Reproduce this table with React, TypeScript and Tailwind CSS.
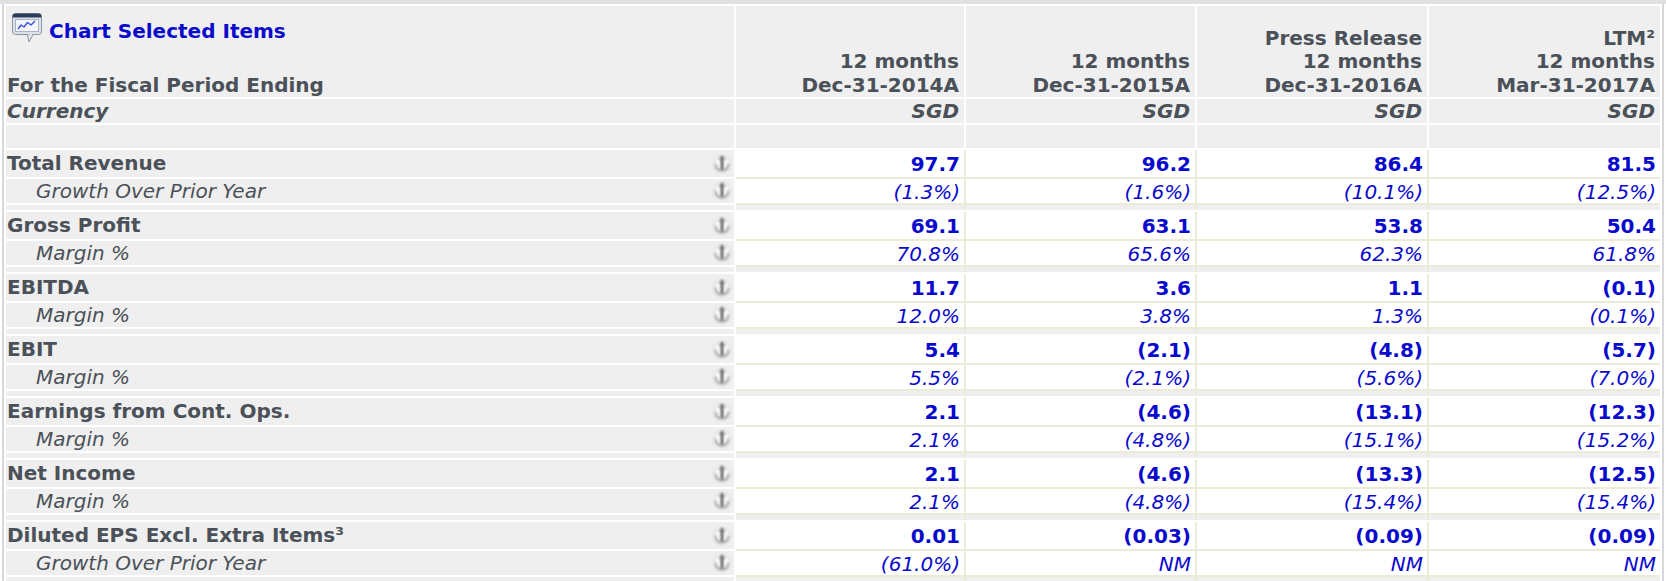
import React from "react";

type Group = { label: string; sub: string; main: string[]; subv: string[] };

const groups: Group[] = [
  { label: "Total Revenue", sub: "Growth Over Prior Year", main: ["97.7", "96.2", "86.4", "81.5"], subv: ["(1.3%)", "(1.6%)", "(10.1%)", "(12.5%)"] },
  { label: "Gross Profit", sub: "Margin %", main: ["69.1", "63.1", "53.8", "50.4"], subv: ["70.8%", "65.6%", "62.3%", "61.8%"] },
  { label: "EBITDA", sub: "Margin %", main: ["11.7", "3.6", "1.1", "(0.1)"], subv: ["12.0%", "3.8%", "1.3%", "(0.1%)"] },
  { label: "EBIT", sub: "Margin %", main: ["5.4", "(2.1)", "(4.8)", "(5.7)"], subv: ["5.5%", "(2.1%)", "(5.6%)", "(7.0%)"] },
  { label: "Earnings from Cont. Ops.", sub: "Margin %", main: ["2.1", "(4.6)", "(13.1)", "(12.3)"], subv: ["2.1%", "(4.8%)", "(15.1%)", "(15.2%)"] },
  { label: "Net Income", sub: "Margin %", main: ["2.1", "(4.6)", "(13.3)", "(12.5)"], subv: ["2.1%", "(4.8%)", "(15.4%)", "(15.4%)"] },
  { label: "Diluted EPS Excl. Extra Items³", sub: "Growth Over Prior Year", main: ["0.01", "(0.03)", "(0.09)", "(0.09)"], subv: ["(61.0%)", "NM", "NM", "NM"] },
];

const colW = ["w-[228px]", "w-[229px]", "w-[230px]", "w-[231px]"];

const headers: string[][] = [
  ["12 months", "Dec-31-2014A"],
  ["12 months", "Dec-31-2015A"],
  ["Press Release", "12 months", "Dec-31-2016A"],
  ["LTM²", "12 months", "Mar-31-2017A"],
];

function ChartIcon() {
  return (
    <svg width="30" height="30" viewBox="0 0 30 30" className="shrink-0">
      <path d="M15 20 L17 29 L22 20 Z" fill="#dde1e8" stroke="#8d96a3" strokeWidth="1" />
      <rect x="0.5" y="0.5" width="29" height="21" rx="3" fill="#dde1e8" stroke="#8d96a3" strokeWidth="1" />
      <path d="M3.5 0.5 H26.5 A3 3 0 0 1 29.5 3.5 V4.5 H0.5 V3.5 A3 3 0 0 1 3.5 0.5 Z" fill="#2c3d5c" />
      <rect x="3.5" y="6.5" width="23" height="12" fill="#f3f5fb" stroke="#aab3c3" strokeWidth="1" />
      <polyline points="6,16 9,12 12,14 15.5,9.5 19,12 23,8" fill="none" stroke="#3f56d6" strokeWidth="1.5" strokeLinejoin="round" />
      <path d="M16 20.5 L17.3 27 L21 20.5" fill="#dde1e8" />
    </svg>
  );
}

function Anchor() {
  return (
    <svg width="22" height="20" viewBox="0 0 22 20" className="shrink-0">
      <defs>
        <radialGradient id="anc-bg" cx="50%" cy="50%" r="50%">
          <stop offset="0%" stopColor="#ffffff" />
          <stop offset="65%" stopColor="#f6f6f6" />
          <stop offset="100%" stopColor="#dcdcdc" stopOpacity="0.7" />
        </radialGradient>
        <filter id="anc-blur" x="-30%" y="-30%" width="160%" height="160%">
          <feGaussianBlur stdDeviation="0.8" />
        </filter>
      </defs>
      <circle cx="11" cy="10" r="9.5" fill="url(#anc-bg)" filter="url(#anc-blur)" />
      <g filter="url(#anc-blur)" fill="none" strokeLinecap="round">
        <path d="M11 3 V15.5" stroke="#555" strokeWidth="2.6" />
        <path d="M8.4 5 H13.6" stroke="#777" strokeWidth="1.4" />
        <path d="M4.5 10.5 Q5.5 16.5 11 16.5 Q16.5 16.5 17.5 10.5" stroke="#a0a0a0" strokeWidth="1.8" />
      </g>
    </svg>
  );
}

export default function App() {
  return (
    <div className="w-[1666px] h-[581px] overflow-hidden bg-white font-['DejaVu_Sans','Verdana',sans-serif] text-[20px] text-[#4b5158]">
      <div className="h-[4px] bg-[#dfe0e1]" />
      <div className="mx-[2px] h-[577px] overflow-hidden border-x-2 border-[#d5d8dc] px-[2px] pt-[2px]">
        {/* Header row */}
        <div className="flex gap-[2px] mb-[2px]">
          <div className="w-[728px] h-[91px] bg-[#efefef] flex flex-col justify-between">
            <div className="flex items-end gap-[7px] pl-[6px] pt-[7px]">
              <ChartIcon />
              <span className="font-bold text-[#0a0acc] leading-[23px] whitespace-nowrap">Chart Selected Items</span>
            </div>
            <div className="font-bold leading-[23.5px] pl-[1px] whitespace-nowrap">For the Fiscal Period Ending</div>
          </div>
          {headers.map((lines, i) => (
            <div key={i} className={`${colW[i]} h-[91px] bg-[#efefef] flex flex-col justify-end items-end pr-[5px] font-bold leading-[23.5px] whitespace-nowrap`}>
              {lines.map((l, j) => (
                <div key={j}>{l}</div>
              ))}
            </div>
          ))}
        </div>

        {/* Currency row */}
        <div className="flex gap-[2px] mb-[2px]">
          <div className="w-[728px] h-[24px] bg-[#efefef] font-bold italic leading-[24px] pl-[1px]">Currency</div>
          {colW.map((w, i) => (
            <div key={i} className={`${w} h-[24px] bg-[#efefef] font-bold italic leading-[24px] text-right pr-[5px]`}>SGD</div>
          ))}
        </div>

        {/* Empty row */}
        <div className="flex gap-[2px] mb-[2px]">
          <div className="w-[728px] h-[23px] bg-[#efefef]" />
          {colW.map((w, i) => (
            <div key={i} className={`${w} h-[23px] bg-[#efefef]`} />
          ))}
        </div>

        {groups.map((g, gi) => (
          <div key={gi}>
            {/* main row */}
            <div className="flex gap-[2px] items-start">
              <div className="w-[728px] h-[27px] mb-[2px] bg-[#efefef] flex items-center justify-between pr-[1px]">
                <span className="font-bold leading-[27px] pl-[1px] whitespace-nowrap">{g.label}</span>
                <Anchor />
              </div>
              <div className="flex gap-[2px] pb-[2px] bg-[#ebebda]">
                {g.main.map((v, i) => (
                  <div key={i} className={`${colW[i]} h-[27px] bg-white text-right pr-[4px] pt-[2px] leading-[25px] font-bold text-[#0a0acc]`}>{v}</div>
                ))}
              </div>
            </div>
            {/* sub row */}
            <div className="flex gap-[2px] items-start">
              <div className="w-[728px] h-[24px] mb-[2px] bg-[#efefef] flex items-center justify-between pr-[1px]">
                <span className="italic leading-[24px] pl-[30px] whitespace-nowrap">{g.sub}</span>
                <Anchor />
              </div>
              <div className="flex gap-[2px] pb-[2px] bg-[#ebebda]">
                {g.subv.map((v, i) => (
                  <div key={i} className={`${colW[i]} h-[24px] bg-white text-right pr-[4px] pt-[2px] leading-[22px] italic text-[#0a0acc]`}>{v}</div>
                ))}
              </div>
            </div>
            {/* spacer row */}
            <div className="flex gap-[2px] items-start">
              <div className="w-[728px] h-[5px] mb-[2px] bg-[#efefef]" />
              <div className="flex gap-[2px] mb-[2px] bg-[#ebebda]">
                {colW.map((w, i) => (
                  <div key={i} className={`${w} h-[5px] bg-[#efefef]`} />
                ))}
              </div>
            </div>
          </div>
        ))}
      </div>
    </div>
  );
}
